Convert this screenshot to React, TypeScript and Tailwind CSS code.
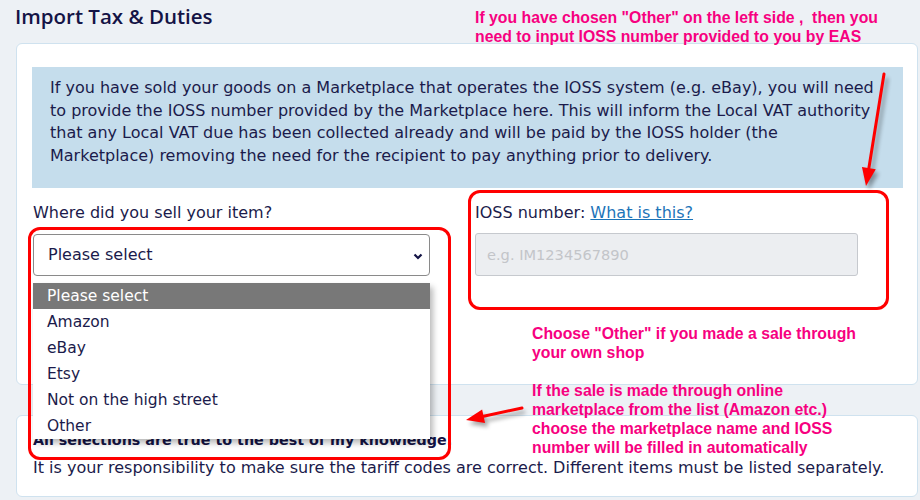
import React from 'react';

const options = ['Please select', 'Amazon', 'eBay', 'Etsy', 'Not on the high street', 'Other'];

function Arrow({ x1, y1, x2, y2 }: { x1: number; y1: number; x2: number; y2: number }) {
  // red callout arrow with a soft drop shadow
  const a = Math.atan2(y2 - y1, x2 - x1);
  const len = 18;
  const w = 7;
  const bx = x2 - Math.cos(a) * len;
  const by = y2 - Math.sin(a) * len;
  const px = -Math.sin(a) * w;
  const py = Math.cos(a) * w;
  const head = `${x2},${y2} ${bx + px},${by + py} ${bx - px},${by - py}`;
  return (
    <g>
      <g transform="translate(3,4)" opacity="0.35" filter="url(#blur)">
        <line x1={x1} y1={y1} x2={bx} y2={by} stroke="#000" strokeWidth="3" />
        <polygon points={head} fill="#000" />
      </g>
      <line x1={x1} y1={y1} x2={bx} y2={by} stroke="#ff0000" strokeWidth="3" strokeLinecap="round" />
      <polygon points={head} fill="#ff0000" />
    </g>
  );
}

const note = { fontFamily: '"Liberation Sans", Arial, sans-serif' };

export default function App() {
  return (
    <div
      className="relative w-[920px] h-[500px] overflow-hidden bg-[#edf1f5] text-[#1b1b4b]"
      style={{ fontFamily: '"DejaVu Sans", "Noto Sans", sans-serif' }}
    >
      <h2
        className="pl-[15px] pt-[3px] h-[43px] text-[20.5px] font-semibold leading-[26px] text-[#141446]"
        style={{ fontFamily: '"Open Sans", sans-serif' }}
      >
        Import Tax &amp; Duties
      </h2>

      {/* Main card */}
      <div className="ml-[16px] w-[902px] h-[342px] bg-white border border-[#cfe2ef] rounded-md pt-[23px] pl-[15px]">
        <div className="w-[871px] h-[121px] bg-[#c5ddec] pl-[18px] pt-[10px] text-[16px] leading-[22.5px] whitespace-nowrap">
          If you have sold your goods on a Marketplace that operates the IOSS system (e.g. eBay), you will need
          <br />
          to provide the IOSS number provided by the Marketplace here. This will inform the Local VAT authority
          <br />
          that any Local VAT due has been collected already and will be paid by the IOSS holder (the
          <br />
          Marketplace) removing the need for the recipient to pay anything prior to delivery.
        </div>

        <div className="flex mt-[14px]">
          <div className="w-[397px] ml-[1px]">
            <div className="h-[22px] text-[16px] leading-[22px]">Where did you sell your item?</div>
            <div className="relative mt-[10px] h-[42px] border border-[#8a8a8a] rounded-[4px] flex items-center pl-[14px] text-[16px]">
              Please select
              <svg className="absolute right-[6px] top-[18px]" width="10" height="7" viewBox="0 0 10 7">
                <path d="M1.5 1.5 L5 5 L8.5 1.5" fill="none" stroke="#141446" strokeWidth="2.2" />
              </svg>
            </div>
          </div>

          <div className="w-[383px] ml-[45px]">
            <div className="h-[22px] text-[16px] leading-[22px]">
              IOSS number:{' '}
              <a className="text-[#1c74b9] underline">What is this?</a>
            </div>
            <div className="mt-[9px] h-[43px] bg-[#eceef1] border border-[#c6c9ce] rounded-[3px] flex items-center pl-[11px] text-[14.6px] text-[#c3c5c9]">
              e.g. IM1234567890
            </div>
          </div>
        </div>
      </div>

      {/* Declaration card */}
      <div className="ml-[16px] mt-[30px] w-[902px] h-[82px] bg-white border border-[#cfe2ef] rounded-md pl-[16px] pt-[10px] text-[16px] leading-[28px] whitespace-nowrap">
        <div className="font-bold text-[14.3px] text-[#141446]">All selections are true to the best of my knowledge.</div>
        <div>It is your responsibility to make sure the tariff codes are correct. Different items must be listed separately.</div>
      </div>

      {/* Open select list */}
      <div className="absolute left-[33px] top-[283px] w-[397px] bg-white shadow-[3px_4px_6px_rgba(0,0,0,0.28)] text-[15.5px]">
        {options.map((o, i) => (
          <div
            key={o}
            className={`h-[26px] leading-[27px] pl-[14px] ${i === 0 ? 'bg-[#787878] text-white' : ''}`}
          >
            {o}
          </div>
        ))}
      </div>

      {/* Annotation boxes */}
      <div className="absolute left-[28px] top-[227px] w-[423px] h-[233px] border-[3px] border-[#ff0000] rounded-[12px]" />
      <div className="absolute left-[468px] top-[190px] w-[421px] h-[120px] border-[3px] border-[#ff0000] rounded-[12px]" />

      <svg className="absolute left-0 top-0 pointer-events-none" width="920" height="500">
        <defs>
          <filter id="blur" x="-20%" y="-20%" width="140%" height="140%">
            <feGaussianBlur stdDeviation="2" />
          </filter>
        </defs>
        <Arrow x1={884} y1={74} x2={866} y2={186} />
        <Arrow x1={522} y1={408} x2={466} y2={420} />
      </svg>

      {/* Annotation notes */}
      <div className="absolute left-[475px] top-[8px] text-[15.8px] leading-[19px] font-bold text-[#f70080]" style={note}>
        If you have chosen "Other" on the left side ,&nbsp; then you
        <br />
        need to input IOSS number provided to you by EAS
      </div>
      <div className="absolute left-[532px] top-[324px] text-[15.8px] leading-[19px] font-bold text-[#f70080]" style={note}>
        Choose "Other" if you made a sale through
        <br />
        your own shop
      </div>
      <div className="absolute left-[532px] top-[381px] text-[15.8px] leading-[19px] font-bold text-[#f70080]" style={note}>
        If the sale is made through online
        <br />
        marketplace from the list (Amazon etc.)
        <br />
        choose the marketplace name and IOSS
        <br />
        number will be filled in automatically
      </div>
    </div>
  );
}
